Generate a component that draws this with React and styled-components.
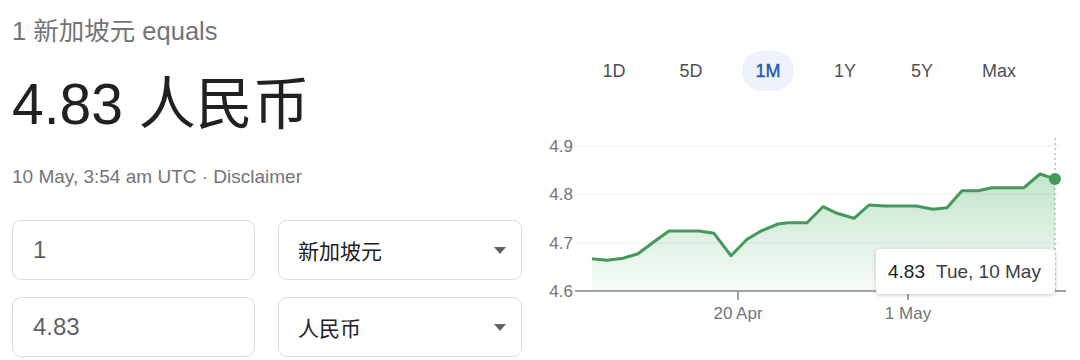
import React from "react";
import styled, { createGlobalStyle } from "styled-components";

const GlobalStyle = createGlobalStyle`
  body {
    margin: 0;
    background: #fff;
    font-family: "Liberation Sans", Arial, "Noto Sans CJK SC", sans-serif;
  }
`;

const Page = styled.div`
  display: flex;
  width: 1080px;
  height: 360px;
  overflow: hidden;
`;

const Left = styled.div`
  width: 528px;
  padding: 16px 0 0 12px;
  box-sizing: content-box;
`;

const Equals = styled.div`
  font-size: 25.5px;
  line-height: 30px;
  color: #70757a;
`;

const BigValue = styled.div`
  margin-top: 26px;
  font-size: 57px;
  line-height: 64px;
  color: #202124;
`;

const Stamp = styled.div`
  margin-top: 29px;
  font-size: 19px;
  line-height: 24px;
  color: #70757a;
`;

const Form = styled.div`
  margin-top: 31px;
  display: grid;
  grid-template-columns: 243px 244px;
  grid-auto-rows: 60px;
  column-gap: 23px;
  row-gap: 17px;
`;

const Field = styled.div`
  box-sizing: border-box;
  border: 1px solid #dadce0;
  border-radius: 9px;
  display: flex;
  align-items: center;
  justify-content: space-between;
  padding: 0 15px 0 ${(p) => (p.$select ? "19px" : "20px")};
  font-size: ${(p) => (p.$select ? "21px" : "24px")};
  color: ${(p) => (p.$select ? "#202124" : "#5f6368")};
`;

const Caret = styled.span`
  width: 0;
  height: 0;
  border-left: 6.5px solid transparent;
  border-right: 6.5px solid transparent;
  border-top: 7px solid #5f6368;
`;

const Right = styled.div`
  width: 540px;
  display: flex;
  flex-direction: column;
`;

const Tabs = styled.div`
  display: flex;
  gap: 25px;
  margin-top: 51px;
  padding-left: 48px;
`;

const Tab = styled.div`
  width: 52px;
  height: 40px;
  border-radius: 20px;
  display: flex;
  align-items: center;
  justify-content: center;
  font-size: 18px;
  color: ${(p) => (p.$active ? "#1f57b8" : "#4d5156")};
  background: ${(p) => (p.$active ? "#eef3fa" : "transparent")};
  -webkit-text-stroke: ${(p) => (p.$active ? "0.4px #1f57b8" : "0")};
`;

const ChartBox = styled.div`
  position: relative;
  margin-top: 39px;
  width: 540px;
  height: 200px;
`;

const Tooltip = styled.div`
  position: absolute;
  left: 336px;
  top: 119px;
  width: 179px;
  height: 45px;
  box-sizing: border-box;
  background: #fff;
  border-radius: 4px;
  box-shadow: 0 1px 4px rgba(0, 0, 0, 0.22);
  display: flex;
  align-items: center;
  padding-left: 12px;
  font-size: 19px;
  white-space: nowrap;
`;

const TipValue = styled.span`
  color: #202124;
  margin-right: 11px;
`;

const TipDate = styled.span`
  color: #3c4043;
`;

const points = [
  [592, 258.7], [607, 260.3], [623, 258.3], [638, 253.7], [654, 241.7],
  [669, 231], [699, 231], [714, 233.3], [731, 255.7], [747, 239.3],
  [761, 231], [778, 224], [788, 222.7], [807, 222.7], [823, 206.7],
  [837, 213.3], [854, 218.3], [869, 205], [885, 206], [916, 206],
  [933, 209.3], [947, 207.7], [962, 190.7], [978, 190.7], [992, 187.7],
  [1024, 187.7], [1040, 174], [1055, 179],
];

const grid = [
  { label: "4.9", y: 146 },
  { label: "4.8", y: 194 },
  { label: "4.7", y: 243 },
];

function Chart() {
  const line = points.map(([x, y], i) => `${i ? "L" : "M"}${x} ${y}`).join(" ");
  const area = `${line} L1055 291 L592 291 Z`;
  const axisText = { fontSize: 17, fill: "#70757a", fontFamily: "Liberation Sans, Arial, sans-serif" };

  return (
    <svg width="540" height="200" viewBox="540 130 540 200">
      <defs>
        <linearGradient id="fill" x1="0" y1="174" x2="0" y2="291" gradientUnits="userSpaceOnUse">
          <stop offset="0" stopColor="#34a853" stopOpacity="0.3" />
          <stop offset="1" stopColor="#34a853" stopOpacity="0.04" />
        </linearGradient>
      </defs>
      {grid.map((g) => (
        <g key={g.label}>
          <line x1="576" x2="1060" y1={g.y} y2={g.y} stroke="#ececec" strokeWidth="1" />
          <text x="573" y={g.y + 6} textAnchor="end" {...axisText}>{g.label}</text>
        </g>
      ))}
      <text x="573" y="297" textAnchor="end" {...axisText}>4.6</text>
      <path d={area} fill="url(#fill)" />
      <line x1="1055" x2="1055" y1="138" y2="291" stroke="#9aa0a6" strokeWidth="1" strokeDasharray="2 3" />
      <line x1="575" x2="1066" y1="291" y2="291" stroke="#80868b" strokeWidth="1.5" />
      <line x1="738" x2="738" y1="291" y2="300" stroke="#80868b" strokeWidth="1.5" />
      <line x1="908" x2="908" y1="291" y2="300" stroke="#80868b" strokeWidth="1.5" />
      <text x="738" y="319" textAnchor="middle" {...axisText}>20 Apr</text>
      <text x="908" y="319" textAnchor="middle" {...axisText}>1 May</text>
      <path d={line} fill="none" stroke="#45995a" strokeWidth="3" strokeLinejoin="round" />
      <circle cx="1055" cy="179" r="6" fill="#45995a" />
    </svg>
  );
}

export default function App() {
  const ranges = ["1D", "5D", "1M", "1Y", "5Y", "Max"];
  return (
    <>
      <GlobalStyle />
      <Page>
        <Left>
          <Equals>1 新加坡元 equals</Equals>
          <BigValue>4.83 人民币</BigValue>
          <Stamp>10 May, 3:54 am UTC · Disclaimer</Stamp>
          <Form>
            <Field>1</Field>
            <Field $select>
              新加坡元
              <Caret />
            </Field>
            <Field>4.83</Field>
            <Field $select>
              人民币
              <Caret />
            </Field>
          </Form>
        </Left>
        <Right>
          <Tabs>
            {ranges.map((r) => (
              <Tab key={r} $active={r === "1M"}>{r}</Tab>
            ))}
          </Tabs>
          <ChartBox>
            <Chart />
            <Tooltip>
              <TipValue>4.83</TipValue>
              <TipDate>Tue, 10 May</TipDate>
            </Tooltip>
          </ChartBox>
        </Right>
      </Page>
    </>
  );
}
